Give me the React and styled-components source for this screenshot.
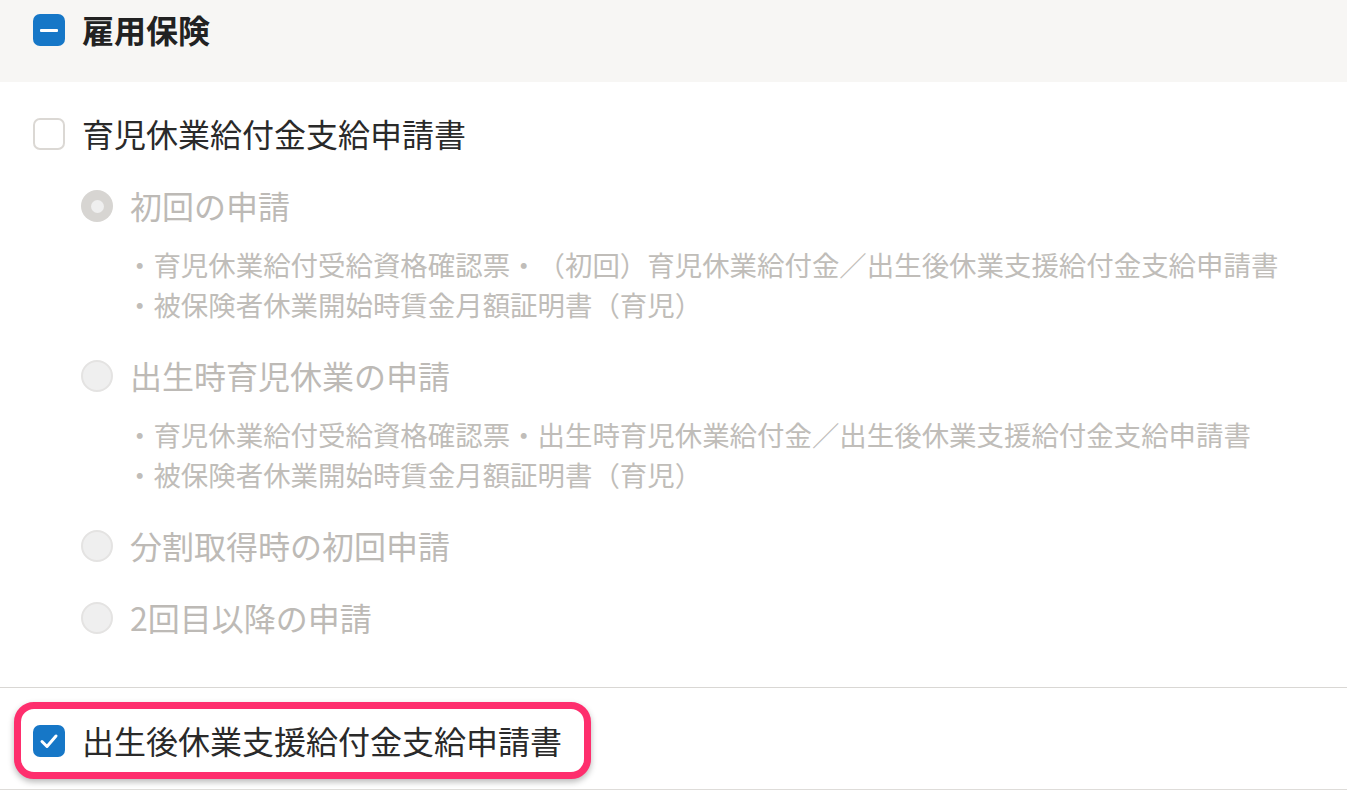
import React from "react";
import styled, { createGlobalStyle } from "styled-components";

const GlobalStyle = createGlobalStyle`
  html, body {
    margin: 0;
    padding: 0;
    background: #ffffff;
  }
  body {
    font-family: "Noto Sans CJK JP", "Noto Sans", sans-serif;
    color: #2a2a2a;
    text-spacing-trim: space-all;
  }
`;

const Page = styled.div`
  width: 1347px;
  height: 793px;
  overflow: hidden;
  background: #fff;
`;

const Header = styled.div`
  display: flex;
  align-items: flex-start;
  gap: 17px;
  height: 82px;
  box-sizing: border-box;
  padding: 14px 33px 0;
  background: #f7f6f4;
`;

const HeaderTitle = styled.span`
  font-size: 32px;
  font-weight: 700;
  line-height: 30px;
  color: #222;
`;

const Box = styled.span`
  flex: none;
  display: flex;
  align-items: center;
  justify-content: center;
  width: 32px;
  height: 32px;
  box-sizing: border-box;
  border-radius: 7px;
  background: ${(p) => (p.$on ? "#1677c7" : "#fff")};
  border: ${(p) => (p.$on ? "none" : "2px solid #dbd8d4")};
`;

const Dash = styled.span`
  width: 18px;
  height: 3px;
  border-radius: 1px;
  background: #fff;
`;

const Body = styled.div`
  display: flex;
  flex-direction: column;
  padding: 36px 0 0;
`;

const CheckRow = styled.div`
  display: flex;
  align-items: center;
  gap: 17px;
  padding-left: 33px;
`;

const Label = styled.span`
  font-size: 32px;
  line-height: 30px;
  padding-bottom: 2px;
  color: ${(p) => (p.$muted ? "#bdbab6" : "#2a2a2a")};
  white-space: nowrap;
`;

const Options = styled.div`
  display: flex;
  flex-direction: column;
  padding: 40px 0 53px 81px;
`;

const RadioRow = styled.div`
  display: flex;
  align-items: center;
  gap: 17px;
  margin-top: ${(p) => p.$gap || 0}px;
`;

const Radio = styled.span`
  flex: none;
  display: flex;
  align-items: center;
  justify-content: center;
  width: 32px;
  height: 32px;
  box-sizing: border-box;
  border-radius: 50%;
  background: ${(p) => (p.$on ? "#d7d5d2" : "#efefef")};
  border: ${(p) => (p.$on ? "none" : "2px solid #e4e3e2")};
`;

const RadioDot = styled.span`
  width: 13px;
  height: 13px;
  border-radius: 50%;
  background: #efefef;
`;

const Docs = styled.ul`
  list-style: none;
  margin: 22px 0 0;
  padding: 0 0 0 45px;
`;

const Doc = styled.li`
  font-size: 27.45px;
  line-height: 40px;
  color: #c0bdb9;
  white-space: nowrap;
  text-spacing-trim: space-all;
`;

const Divider = styled.div`
  height: 1px;
  background: #d9d7d4;
`;

const Footer = styled.div`
  display: flex;
  flex-direction: column;
  padding-top: 14px;
`;

const Highlight = styled.div`
  align-self: flex-start;
  display: flex;
  align-items: center;
  gap: 17px;
  margin-left: 14px;
  padding: 0 22px 0 12px;
  height: 77px;
  box-sizing: border-box;
  border: 7px solid #fe2e6d;
  border-radius: 20px;
  background: #fff;
  box-shadow: 0 3px 6px rgba(0, 0, 0, 0.28);
`;

const BottomLine = styled.div`
  margin-top: 10px;
  height: 1px;
  background: #dedcd9;
`;

const Check = () => (
  <svg width="32" height="32" viewBox="0 0 32 32" fill="none">
    <polyline
      points="9,16.5 14,21.5 23,11"
      stroke="#fff"
      strokeWidth="3"
      strokeLinecap="round"
      strokeLinejoin="round"
    />
  </svg>
);

const options = [
  {
    label: "初回の申請",
    on: true,
    docs: [
      "・育児休業給付受給資格確認票・（初回）育児休業給付金／出生後休業支援給付金支給申請書",
      "・被保険者休業開始時賃金月額証明書（育児）",
    ],
  },
  {
    label: "出生時育児休業の申請",
    docs: [
      "・育児休業給付受給資格確認票・出生時育児休業給付金／出生後休業支援給付金支給申請書",
      "・被保険者休業開始時賃金月額証明書（育児）",
    ],
  },
  { label: "分割取得時の初回申請" },
  { label: "2回目以降の申請" },
];

export default function App() {
  return (
    <Page>
      <GlobalStyle />
      <Header>
        <Box $on>
          <Dash />
        </Box>
        <HeaderTitle>雇用保険</HeaderTitle>
      </Header>

      <Body>
        <CheckRow>
          <Box />
          <Label>育児休業給付金支給申請書</Label>
        </CheckRow>

        <Options>
          {options.map((o, i) => (
            <div key={o.label}>
              <RadioRow $gap={i === 0 ? 0 : 36 + (options[i - 1].docs ? 0 : 4)}>
                <Radio $on={o.on}>{o.on && <RadioDot />}</Radio>
                <Label $muted>{o.label}</Label>
              </RadioRow>
              {o.docs && (
                <Docs>
                  {o.docs.map((d) => (
                    <Doc key={d}>{d}</Doc>
                  ))}
                </Docs>
              )}
            </div>
          ))}
        </Options>

        <Divider />

        <Footer>
          <Highlight>
            <Box $on>
              <Check />
            </Box>
            <Label>出生後休業支援給付金支給申請書</Label>
          </Highlight>
          <BottomLine />
        </Footer>
      </Body>
    </Page>
  );
}
